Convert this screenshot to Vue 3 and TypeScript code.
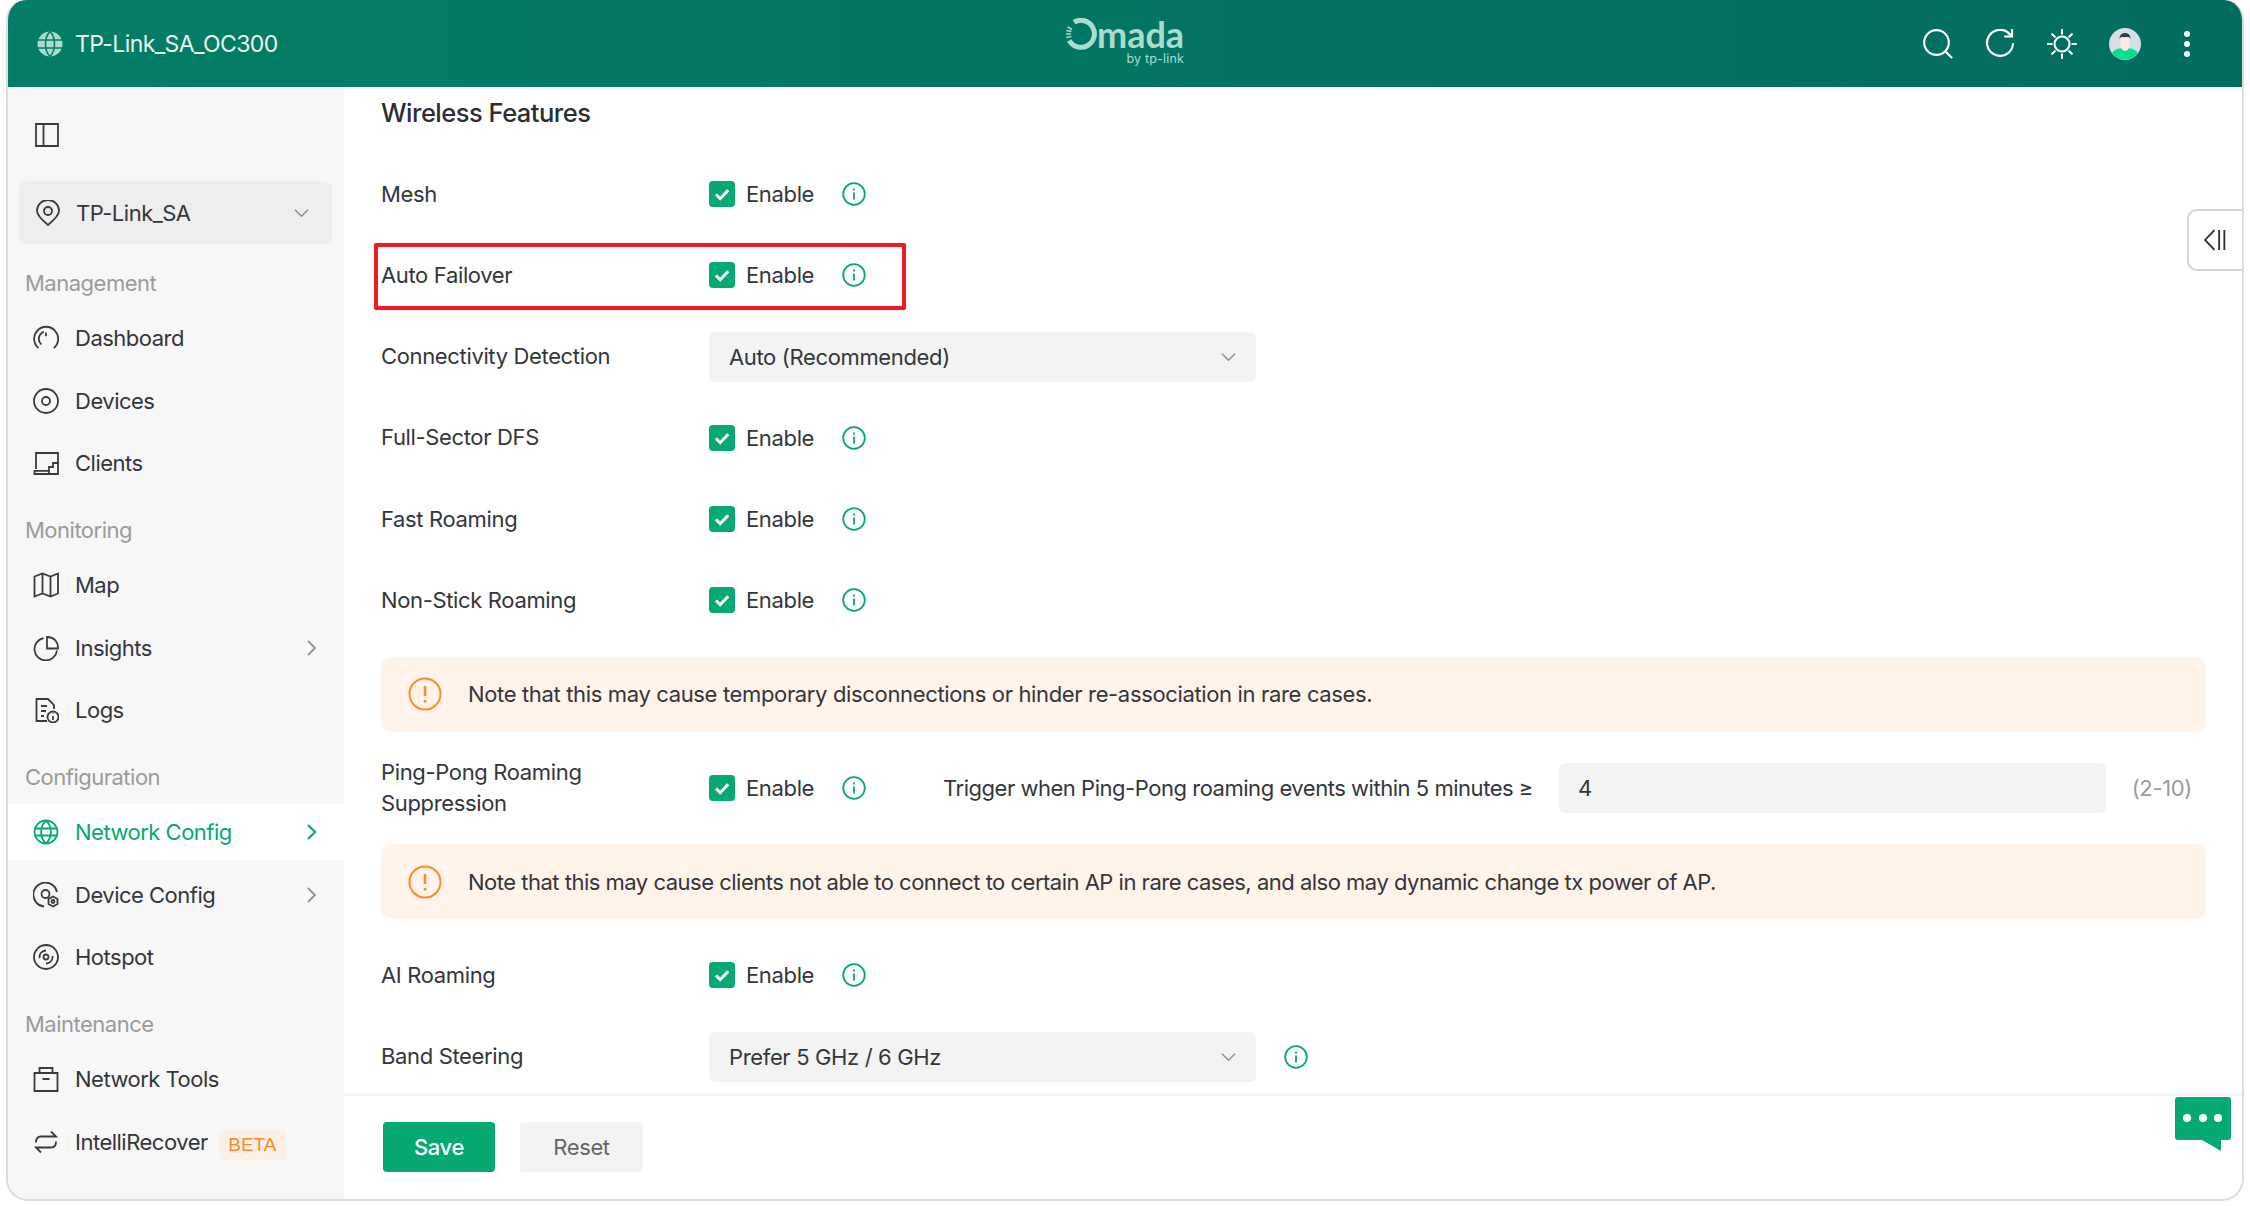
<script setup lang="ts">
interface NavItem {
  label: string;
  icon: string;
  arrow?: boolean;
  active?: boolean;
  badge?: string;
}

interface NavGroup {
  title: string;
  items: NavItem[];
}

interface FormRow {
  kind: 'check' | 'select' | 'note';
  label?: string;
  value?: string;
  info?: boolean;
  highlight?: boolean;
  trigger?: string;
  tight?: boolean;
}

const circle = (cx: number, cy: number, r: number) =>
  `M${cx - r} ${cy}a${r} ${r} 0 1 0 ${r * 2} 0a${r} ${r} 0 1 0 ${-r * 2} 0z`;

const navGroups: NavGroup[] = [
  {
    title: 'Management',
    items: [
      { label: 'Dashboard', icon: 'M5.5 23A12 12 0 1 1 20.8 23M8.4 19.500A7.500 7.500 0 0 1 10.800 6.800M13 7.500v3.800' },
      { label: 'Devices', icon: circle(13, 13, 12) + circle(13, 13, 4) },
      { label: 'Clients', icon: 'M3 19V3h22v21H1.500v-3.200H16M16 24v-7h4v-4h5' },
    ],
  },
  {
    title: 'Monitoring',
    items: [
      { label: 'Map', icon: 'M1.500 4.500l8-3 8 3 7.500-3v20l-7.500 3-8-3-8 3zM9.500 1.500v20M17.500 4.500v20' },
      { label: 'Insights', icon: 'M10.500 3A11.300 11.300 0 1 0 24 15.500M14 2a10.500 10.500 0 0 1 11 11.500H14z', arrow: true },
      { label: 'Logs', icon: 'M14 24H3.500V2H15l6 6v4M8 9h6M8 14h5M8 19h3M20 16.500v.5M20 19v4' + circle(20, 20, 5.500) },
    ],
  },
  {
    title: 'Configuration',
    items: [
      { label: 'Network Config', icon: circle(13, 13, 11.500) + 'M13 1.500c-6.500 6-6.500 17 0 23M13 1.500c6.500 6 6.500 17 0 23M2 9.500h22M2 16.500h22', arrow: true, active: true },
      { label: 'Device Config', icon: 'M24 10A12 12 0 1 0 11 24.500' + circle(12.500, 12, 4) + 'M20 14.500l4.500 2.500v5l-4.500 2.500-4.500-2.500v-5z' + circle(20, 19.500, 1.500), arrow: true },
      { label: 'Hotspot', icon: circle(13, 13, 12) + circle(13, 13, 2.500) + 'M6.500 14A6.500 6.500 0 0 1 13 6.500M19.500 12A6.500 6.500 0 0 1 13 19.500' },
    ],
  },
  {
    title: 'Maintenance',
    items: [
      { label: 'Network Tools', icon: 'M1.500 7h23v18h-23zM6.500 7V2h13v5M9.500 13h7' },
      { label: 'IntelliRecover', icon: 'M3 13.500c0-4 1.500-6 5-6h15l-5-5M23 12.500c0 4-1.500 6-5 6H3l5 5', badge: 'BETA' },
    ],
  },
];

const formRows: FormRow[] = [
  { kind: 'check', label: 'Mesh', info: true },
  { kind: 'check', label: 'Auto Failover', info: true, highlight: true },
  { kind: 'select', label: 'Connectivity Detection', value: 'Auto (Recommended)' },
  { kind: 'check', label: 'Full-Sector DFS', info: true },
  { kind: 'check', label: 'Fast Roaming', info: true },
  { kind: 'check', label: 'Non-Stick Roaming', info: true },
  { kind: 'note', value: 'Note that this may cause temporary disconnections or hinder re-association in rare cases.' },
  {
    kind: 'check',
    label: 'Ping-Pong Roaming Suppression',
    info: true,
    trigger: 'Trigger when Ping-Pong roaming events within 5 minutes ≥',
  },
  { kind: 'note', tight: true, value: 'Note that this may cause clients not able to connect to certain AP in rare cases, and also may dynamic change tx power of AP.' },
  { kind: 'check', label: 'AI Roaming', info: true },
  { kind: 'select', label: 'Band Steering', value: 'Prefer 5 GHz / 6 GHz', info: true },
];
</script>

<template>
  <div class="window">
    <header class="topbar">
      <div class="brand">
        <svg class="brand-globe" viewBox="0 0 26 26">
          <circle cx="13" cy="13" r="12.500" fill="#a9dccf" />
          <path d="M13 .5c-6 6-6 19 0 25M13 .5c6 6 6 19 0 25M1 9h24M1 17h24" fill="none" stroke="#047d66" stroke-width="1.600" />
        </svg>
        <span>TP-Link_SA_OC300</span>
      </div>
      <div class="logo">
        <div class="logo-main">
          <svg class="logo-ring" viewBox="0 0 32 32">
            <path d="M9 4.200A13.500 13.500 0 1 1 4.200 22.500" fill="none" stroke="#a9dccf" stroke-width="5" />
            <path d="M1 16h5M1.400 12.500l5 1M2.600 9l4.500 2.500M1.400 19.500l5-1" stroke="#a9dccf" stroke-width="1.600" />
          </svg>
          <span>mada</span>
        </div>
        <div class="logo-sub">by tp-link</div>
      </div>
      <div class="topbar-actions">
        <svg viewBox="0 0 30 30" class="top-icon">
          <circle cx="13.500" cy="13.500" r="12.300" />
          <path d="M22.500 22.500l6 6" />
        </svg>
        <svg viewBox="0 0 30 30" class="top-icon">
          <path d="M25 5.500A13 13 0 1 0 28 15" />
          <path d="M27 1v6.500h-7" />
        </svg>
        <svg viewBox="0 0 32 32" class="top-icon">
          <circle cx="16" cy="16" r="8" />
          <path d="M16 1v4M16 27v4M1 16h4M27 16h4M5.500 5.500l2.800 2.800M23.700 23.700l2.800 2.800M5.500 26.500l2.800-2.800M23.700 8.300l2.800-2.800" />
        </svg>
        <svg viewBox="0 0 32 32" class="avatar">
          <circle cx="16" cy="16" r="16" fill="#d7dee4" />
          <path d="M3 25c3-4 7-5 13-5s10 1 13 5a16 16 0 0 1-26 0z" fill="#05e08f" />
          <path d="M11.500 10h9v7c0 3-2 6-4.500 6s-4.500-3-4.500-6z" fill="#f6ece8" />
          <path d="M10.500 11c0-4 2.500-6 5.500-6s5.500 2 5.500 6l-1.500-2h-8z" fill="#2d3e50" />
        </svg>
        <div class="dots"><i></i><i></i><i></i></div>
      </div>
    </header>

    <div class="body">
      <aside class="sidebar">
        <svg class="side-toggle" viewBox="0 0 24 24">
          <path d="M1 1h22v22H1zM8.500 1v22" />
        </svg>
        <div class="site-select">
          <svg class="nav-icon" viewBox="0 0 26 26">
            <path d="M13 25C7 20 2 15.500 2 11a11 11 0 0 1 22 0c0 4.500-5 9-11 14z" />
            <circle cx="13" cy="11" r="4" />
          </svg>
          <span class="site-name">TP-Link_SA</span>
          <svg class="chev" viewBox="0 0 16 10"><path d="M1 1.500l7 7 7-7" /></svg>
        </div>

        <nav v-for="group in navGroups" :key="group.title" class="nav-group">
          <div class="group-title">{{ group.title }}</div>
          <a v-for="item in group.items" :key="item.label" class="nav-item" :class="{ active: item.active }">
            <svg class="nav-icon" viewBox="0 0 26 26"><path :d="item.icon" /></svg>
            <span>{{ item.label }}</span>
            <em v-if="item.badge" class="badge">{{ item.badge }}</em>
            <svg v-if="item.arrow" class="nav-arrow" viewBox="0 0 10 16"><path d="M1 1l7 7-7 7" /></svg>
          </a>
        </nav>
      </aside>

      <main class="main">
        <div class="content">
          <h2>Wireless Features</h2>
          <div class="form">
            <template v-for="(row, i) in formRows" :key="i">
              <div v-if="row.kind === 'note'" class="note" :class="{ tight: row.tight }">
                <svg viewBox="0 0 34 34" class="note-icon">
                  <circle cx="17" cy="17" r="15.500" />
                  <path d="M17 9v10M17 23v2.500" />
                </svg>
                <span>{{ row.value }}</span>
              </div>
              <div v-else class="row" :class="{ highlight: row.highlight }">
                <label class="row-label">{{ row.label }}</label>
                <div v-if="row.kind === 'select'" class="select">
                  <span>{{ row.value }}</span>
                  <svg class="chev" viewBox="0 0 16 10"><path d="M1 1.500l7 7 7-7" /></svg>
                </div>
                <template v-else>
                  <span class="check">
                    <svg viewBox="0 0 26 26"><path d="M7 13.500l4.200 4.200 8-8.500" /></svg>
                  </span>
                  <span class="check-text">Enable</span>
                </template>
                <svg v-if="row.info" class="info" viewBox="0 0 24 24">
                  <circle cx="12" cy="12" r="10.800" />
                  <path d="M12 10.500v7M12 6.500v2" />
                </svg>
                <template v-if="row.trigger">
                  <span class="trigger">{{ row.trigger }}</span>
                  <div class="num-input">4</div>
                  <span class="hint">(2-10)</span>
                </template>
              </div>
            </template>
          </div>
        </div>
        <footer class="footer">
          <button class="btn btn-save">Save</button>
          <button class="btn btn-reset">Reset</button>
        </footer>

        <div class="side-tab">
          <svg viewBox="0 0 24 24"><path d="M11 2L2 11.500 11 21M15.500 2v19M20.500 2v19" /></svg>
        </div>
        <svg class="chat" viewBox="0 0 56 54">
          <path d="M3 0h50a3 3 0 0 1 3 3v37a3 3 0 0 1-3 3h-7v11l-19-11H3a3 3 0 0 1-3-3V3a3 3 0 0 1 3-3z" fill="#06a971" />
          <circle cx="12" cy="21" r="4" fill="#fff" />
          <circle cx="28" cy="21" r="4" fill="#fff" />
          <circle cx="43" cy="21" r="4" fill="#fff" />
        </svg>
      </main>
    </div>
  </div>
</template>

<style>
html,
body {
  margin: 0;
  background: #fff;
}
</style>

<style scoped>
.window {
  margin-left: 6px;
  width: 2238px;
  height: 1201px;
  box-sizing: border-box;
  border: 2px solid #dcdcdc;
  border-top: none;
  border-radius: 20px 20px 22px 22px;
  overflow: hidden;
  display: flex;
  flex-direction: column;
  font-family: Inter, "Liberation Sans", sans-serif;
  font-size: 22px;
  letter-spacing: -0.5px;
  color: #33363b;
  background: #fff;
}

/* Top bar */
.topbar {
  flex: none;
  height: 87px;
  margin: 0 -2px;
  display: flex;
  align-items: center;
  position: relative;
  background: linear-gradient(90deg, #037e66, #036c61);
  color: #eaf6f2;
}

.brand {
  display: flex;
  align-items: center;
  gap: 12px;
  padding-left: 31px;
  font-size: 23px;
  letter-spacing: -0.6px;
}

.brand-globe {
  width: 26px;
  height: 26px;
}

.logo {
  position: absolute;
  left: 1059px;
  top: 18px;
  color: #a9dccf;
}

.logo-main {
  display: flex;
  align-items: center;
  font-family: Lato, sans-serif;
  font-weight: 700;
  font-size: 36px;
  line-height: 32px;
  letter-spacing: 0;
}

.logo-ring {
  width: 32px;
  height: 32px;
}

.logo-sub {
  text-align: right;
  font-size: 12.500px;
  line-height: 14px;
  letter-spacing: 0.2px;
  margin-top: 2px;
}

.topbar-actions {
  margin-left: auto;
  display: flex;
  align-items: center;
  gap: 32px;
  padding-right: 54px;
}

.top-icon {
  width: 30px;
  height: 30px;
  fill: none;
  stroke: #fff;
  stroke-width: 2.200;
  stroke-linecap: round;
}

.avatar {
  width: 32px;
  height: 32px;
}

.dots {
  display: flex;
  flex-direction: column;
  gap: 4px;
  margin-left: 11px;
}

.dots i {
  width: 6px;
  height: 6px;
  border-radius: 50%;
  background: #fff;
}

.body {
  flex: 1;
  min-height: 0;
  display: flex;
}

/* Sidebar */
.sidebar {
  flex: none;
  width: 336px;
  padding-top: 36px;
  background: #f7f7f7;
}

.side-toggle {
  display: block;
  width: 24px;
  height: 24px;
  margin: 0 0 34px 27px;
  fill: none;
  stroke: #3b3b3b;
  stroke-width: 1.800;
}

.site-select {
  height: 63px;
  margin: 0 12px 23px 11px;
  padding: 0 23px 0 16px;
  display: flex;
  align-items: center;
  gap: 15px;
  border-radius: 8px;
  background: #eeeeee;
}

.site-name {
  flex: 1;
}

.nav-group {
  margin-bottom: 23px;
}

.group-title {
  height: 32px;
  line-height: 32px;
  margin-bottom: 11px;
  padding-left: 17px;
  color: #9b9b9b;
}

.nav-item {
  height: 56px;
  margin-bottom: 6.500px;
  padding: 0 27px 0 25px;
  display: flex;
  align-items: center;
  gap: 16px;
}

.nav-item span {
  white-space: nowrap;
}

.nav-item.active {
  background: #fff;
  color: #06a971;
}

.nav-icon {
  flex: none;
  width: 26px;
  height: 26px;
  fill: none;
  stroke: #3b3b3b;
  stroke-width: 1.800;
}

.nav-item.active .nav-icon {
  stroke: #06a971;
}

.nav-arrow {
  width: 10px;
  height: 16px;
  margin-left: auto;
  fill: none;
  stroke: #8f8f8f;
  stroke-width: 1.800;
}

.nav-item.active .nav-arrow {
  stroke: #06a971;
  stroke-width: 2.200;
}

.badge {
  margin-left: -5px;
  padding: 0 9.500px;
  height: 30px;
  line-height: 30px;
  border-radius: 4px;
  background: #fbefe6;
  color: #ff8a2b;
  font-style: normal;
  font-family: "Liberation Sans", sans-serif;
  font-size: 19px;
  letter-spacing: 0;
  position: relative;
  top: 3px;
}

.chev {
  flex: none;
  width: 15px;
  height: 10px;
  margin-left: auto;
  fill: none;
  stroke: #8f8f8f;
  stroke-width: 1.600;
}

/* Main area */
.main {
  flex: 1;
  min-width: 0;
  display: flex;
  flex-direction: column;
  position: relative;
  letter-spacing: -0.35px;
}

.content {
  flex: 1;
  min-height: 0;
  padding: 9px 36px 0 37px;
  overflow: hidden;
}

h2 {
  margin: 0 0 39px;
  height: 34px;
  line-height: 34px;
  font-size: 25.500px;
  font-weight: 500;
  letter-spacing: -0.5px;
  color: #2b2e33;
}

.form {
  display: flex;
  flex-direction: column;
  gap: 31.250px;
}

.row {
  height: 50px;
  display: flex;
  align-items: center;
  position: relative;
}

.row.highlight::after {
  content: "";
  position: absolute;
  left: -7px;
  top: -7px;
  width: 532px;
  height: 67px;
  box-sizing: border-box;
  border: 4px solid #ed1c24;
  border-radius: 2px;
}

.row-label {
  flex: none;
  width: 328px;
  padding-right: 30px;
  box-sizing: border-box;
  line-height: 31px;
}

.check {
  flex: none;
  width: 26px;
  height: 26px;
  border-radius: 4px;
  background: #06a971;
}

.check svg {
  display: block;
  fill: none;
  stroke: #fff;
  stroke-width: 3;
}

.check-text {
  margin-left: 11px;
  width: 96px;
}

.info {
  flex: none;
  width: 24px;
  height: 24px;
  fill: none;
  stroke: #06a971;
  stroke-width: 1.800;
}

.select {
  flex: none;
  width: 547px;
  height: 50px;
  box-sizing: border-box;
  padding: 0 20px;
  display: flex;
  align-items: center;
  border-radius: 6px;
  background: #f3f3f3;
}

.select + .info {
  margin-left: 28px;
}

.note {
  height: 75px;
  padding-left: 27px;
  display: flex;
  align-items: center;
  gap: 26px;
  border-radius: 10px;
  background: #fff3ea;
}

.note.tight {
  letter-spacing: -0.5px;
}

.note-icon {
  flex: none;
  width: 34px;
  height: 34px;
  fill: none;
  stroke: #ff8a2b;
  stroke-width: 2;
}

.note-icon path {
  stroke-width: 2.600;
}

.trigger {
  margin-left: 77px;
  letter-spacing: -0.47px;
  white-space: nowrap;
}

.num-input {
  flex: 1;
  height: 50px;
  line-height: 50px;
  margin-left: 26px;
  padding-left: 19px;
  border-radius: 6px;
  background: #f3f3f3;
}

.hint {
  margin: 0 14px 0 26px;
  color: #9b9b9b;
}

/* Footer */
.footer {
  flex: none;
  height: 106px;
  box-sizing: border-box;
  padding: 26px 0 0 39px;
  display: flex;
  align-items: flex-start;
  gap: 25px;
  border-top: 3px solid #f6f6f6;
}

.btn {
  height: 50px;
  border: none;
  border-radius: 4px;
  font-family: inherit;
  font-size: 22px;
  letter-spacing: -0.4px;
}

.btn-save {
  width: 112px;
  background: #06a971;
  color: #fff;
  font-weight: 500;
}

.btn-reset {
  width: 123px;
  background: #f3f3f3;
  color: #666;
}

.side-tab {
  position: absolute;
  right: -2px;
  top: 122px;
  width: 57px;
  height: 62px;
  box-sizing: border-box;
  display: flex;
  align-items: center;
  justify-content: center;
  border: 2px solid #d4d4d4;
  border-radius: 10px 0 0 10px;
  background: #fff;
}

.side-tab svg {
  width: 25px;
  height: 25px;
  fill: none;
  stroke: #333;
  stroke-width: 1.800;
}

.chat {
  position: absolute;
  right: 11px;
  top: 1010px;
  width: 56px;
  height: 54px;
}
</style>
